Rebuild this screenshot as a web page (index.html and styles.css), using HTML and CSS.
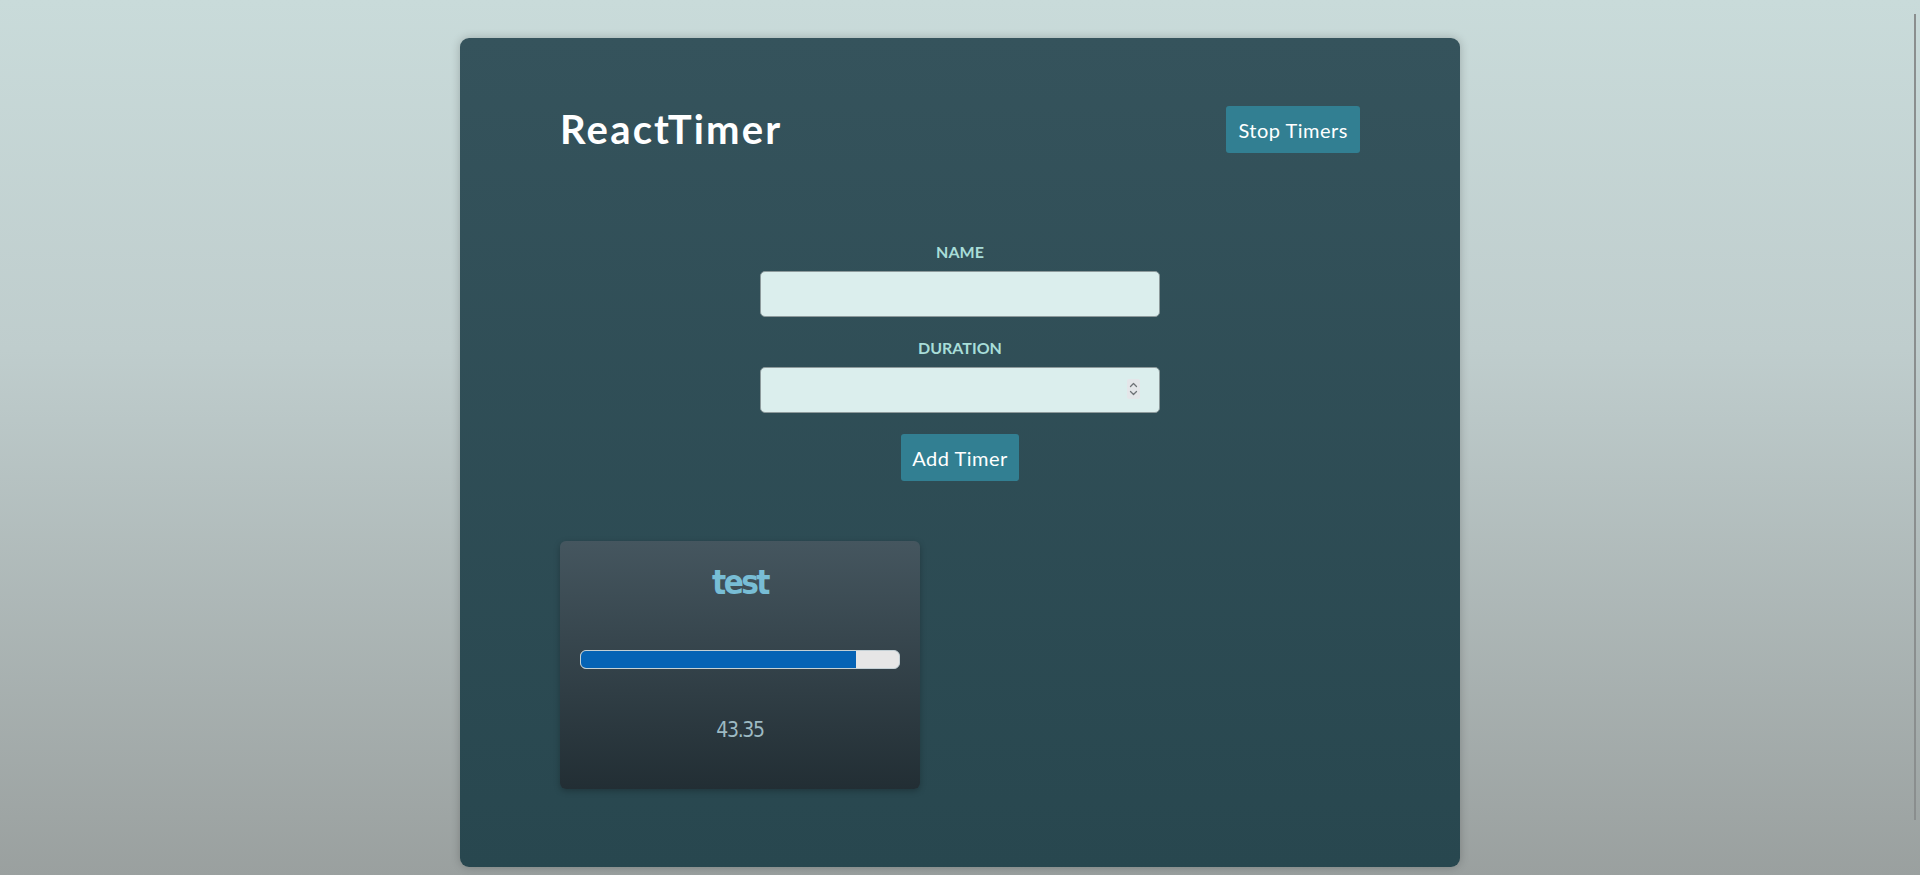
FILE: index.html
```html
<!DOCTYPE html>
<html lang="en">
<head>
<meta charset="utf-8">
<title>ReactTimer</title>
<link rel="stylesheet" href="styles.css">
</head>
<body>
<div class="page">
  <main class="app">
    <header class="app-header">
      <h1 class="app-title">ReactTimer</h1>
      <button class="btn" type="button">Stop Timers</button>
    </header>
    <form class="timer-form">
      <label class="field-label" for="name">Name</label>
      <input class="field-input" id="name" type="text">
      <label class="field-label" for="duration">Duration</label>
      <div class="number-wrap">
        <input class="field-input" id="duration" type="number">
        <span class="spinner">
          <svg width="13" height="20" viewBox="0 0 13 20" aria-hidden="true">
            <path d="M3.5 7.5 L6.5 4.5 L9.5 7.5" fill="none" stroke="#6f7377" stroke-width="1.3" stroke-linecap="round" stroke-linejoin="round"/>
            <path d="M3.5 12.5 L6.5 15.5 L9.5 12.5" fill="none" stroke="#6f7377" stroke-width="1.3" stroke-linecap="round" stroke-linejoin="round"/>
          </svg>
        </span>
      </div>
      <button class="btn btn-add" type="button">Add Timer</button>
    </form>
    <section class="timers">
      <article class="timer-card">
        <h2 class="timer-name">test</h2>
        <div class="progress"><div class="progress-fill" style="width: 86.6%"></div></div>
        <div class="timer-time">43.35</div>
      </article>
    </section>
  </main>
</div>
<div class="scroll-thumb"></div>
</body>
</html>
```
FILE: styles.css
```css
html, body {
  margin: 0;
  height: 100%;
}
body {
  overflow: hidden;
  background: linear-gradient(to bottom, #c9dbda 0%, #bfcdcd 40%, #9aa09f 100%);
  font-family: Lato, "Open Sans", sans-serif;
}
.page {
  display: flex;
  justify-content: center;
  padding-top: 38px;
}
.app {
  width: 1000px;
  height: 829px;
  box-sizing: border-box;
  padding: 68px 100px 0;
  border-radius: 9px;
  background: linear-gradient(to bottom, #35535c 0%, #28474f 100%);
  box-shadow: 0 0 10px rgba(0, 0, 0, 0.22);
}
.app-header {
  display: flex;
  justify-content: space-between;
  align-items: center;
  height: 47px;
}
.app-title {
  margin: 0;
  color: #ffffff;
  font-size: 40px;
  font-weight: 700;
  line-height: 47px;
  letter-spacing: 2.2px;
}
.btn {
  height: 47px;
  padding: 0 12px;
  border: none;
  border-radius: 3px;
  background: #327f92;
  color: #ffffff;
  font-family: Lato, "Open Sans", sans-serif;
  font-size: 20px;
  font-weight: 400;
  letter-spacing: 0.5px;
}
.timer-form {
  display: flex;
  flex-direction: column;
  align-items: center;
  margin-top: 89px;
}
.field-label {
  color: #a8ddd8;
  font-size: 16px;
  font-weight: 700;
  line-height: 20px;
  text-transform: uppercase;
  margin-bottom: 9px;
}
.field-input {
  width: 400px;
  height: 46px;
  box-sizing: border-box;
  border: 1px solid #8d9a9c;
  border-radius: 5px;
  background: #dbeeed;
  margin: 0 0 21px;
  padding: 0 10px;
  font-family: Lato, sans-serif;
  font-size: 16px;
}
.number-wrap {
  position: relative;
  width: 400px;
}
.field-input[type=number]::-webkit-inner-spin-button,
.field-input[type=number]::-webkit-outer-spin-button {
  -webkit-appearance: none;
  margin: 0;
}
.spinner {
  position: absolute;
  top: 12px;
  right: 20px;
  width: 13px;
  height: 20px;
  background: #e4e6e9;
  border-radius: 2px;
  display: block;
}
.spinner svg {
  display: block;
}
.btn-add {
  padding: 0 11px;
}
.timers {
  display: flex;
  margin-top: 60px;
}
.timer-card {
  width: 360px;
  height: 248px;
  box-sizing: border-box;
  padding: 22px 20px 0;
  border-radius: 6px;
  background: linear-gradient(to bottom, #45565f 0%, #222e34 100%);
  box-shadow: 0 2px 6px rgba(0, 0, 0, 0.25);
  display: flex;
  flex-direction: column;
  align-items: stretch;
}
.timer-name {
  margin: 0;
  text-align: center;
  color: #78bdd5;
  font-family: "DejaVu Sans Condensed", "DejaVu Sans", sans-serif;
  font-stretch: condensed;
  font-size: 33px;
  font-weight: 700;
  line-height: 40px;
  letter-spacing: -2.6px;
}
.progress {
  margin-top: 47px;
  height: 19px;
  box-sizing: border-box;
  border: 1px solid #c3d0d5;
  border-radius: 6px;
  background: #e6e6e6;
  overflow: hidden;
}
.progress-fill {
  height: 100%;
  background: #0563b5;
}
.timer-time {
  margin-top: 48px;
  text-align: center;
  color: #9dbac3;
  font-family: "DejaVu Sans Condensed", "DejaVu Sans", sans-serif;
  font-stretch: condensed;
  font-size: 21px;
  font-weight: 400;
  line-height: 26px;
  letter-spacing: -1.3px;
}
.scroll-thumb {
  position: fixed;
  top: 14px;
  right: 4px;
  width: 2px;
  height: 806px;
  background: #8a8e8e;
}
```
